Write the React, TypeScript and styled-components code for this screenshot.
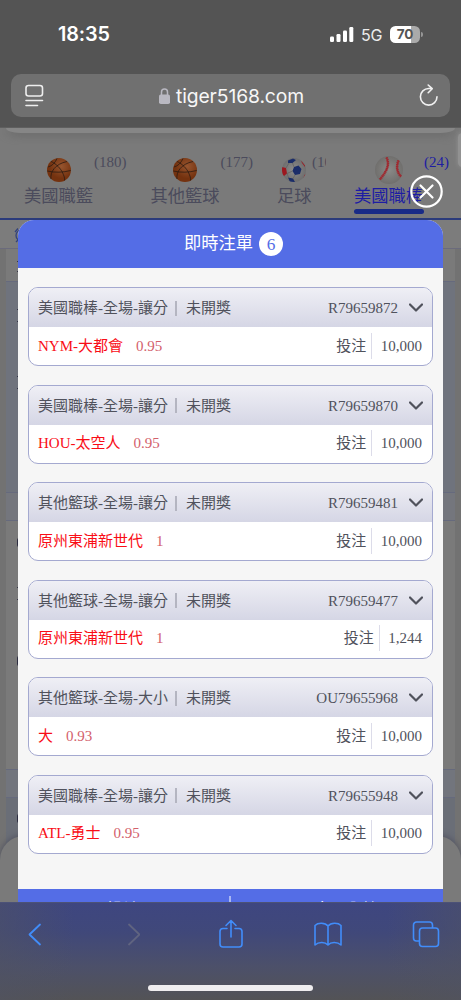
import React from 'react';
import styled, { createGlobalStyle } from 'styled-components';

const Global = createGlobalStyle`
  * { box-sizing: border-box; }
  body { margin: 0; background: #7b7b7b; font-family: "Liberation Serif", "Noto Sans CJK TC", serif; }
`;
const Screen = styled.div`
  width: 461px; height: 1000px; display: flex; flex-direction: column; overflow: hidden;
`;

const Chrome = styled.header`
  height: 128px; flex: none; background: #545454; color: #fff;
  border-bottom: 1px solid #5f5f5f; font-family: Inter, sans-serif;
`;
const StatusBar = styled.div`
  height: 74px; padding: 22px 38px 0 58px; display: flex; justify-content: space-between; align-items: flex-start;
`;
const Clock = styled.div`font-size: 19.8px; line-height: 25px; font-weight: 600; letter-spacing: -0.1px;`;
const Signals = styled.div`display: flex; align-items: center; height: 25px;`;
const Network = styled.span`font-size: 16px; margin-left: 7px; width: 23px; letter-spacing: -0.3px; color: #ededed;`;
const Battery = styled.div`
  margin-left: 6px; width: 30px; height: 17px; border-radius: 5.5px; text-align: center;
  background: linear-gradient(90deg, #fff 70%, #aaa 70%); color: #545454;
  font-weight: 700; font-size: 13.5px; line-height: 17px; letter-spacing: -0.2px;
`;
const BatteryTip = styled.i`width: 2px; height: 5px; margin-left: 1px; border-radius: 0 2px 2px 0; background: #969696;`;
const AddressBar = styled.div`
  height: 43px; margin: 0 11px; padding: 0 11px 0 14px; border-radius: 10px; background: #707070;
  display: flex; align-items: center; justify-content: space-between;
`;
const Address = styled.div`
  display: flex; align-items: center; gap: 6px; font-size: 19.3px; line-height: 24px; letter-spacing: -0.1px; color: #f7f7f7;
`;

const Viewport = styled.main`height: 774px; flex: none; position: relative; overflow: hidden; background: #7a7a7a;`;
const BannerEdge = styled.div`
  height: 5px; margin: 0 6px; background: #868686; border-radius: 0 0 14px 14px / 0 0 5px 5px; box-shadow: 0 2px 9px #656565;
`;
const SideGlow = styled.div`
  position: absolute; right: -6px; top: 5px; width: 9px; height: 34px; border-radius: 5px; background: #929292; box-shadow: 0 0 5px #929292;
`;
const Tabs = styled.nav`
  height: 87px; padding: 23px 0 0 24px; display: flex; border-bottom: 2px solid #2b3b7b;
`;
const Tab = styled.div<{ $w: number; $label: number; $active?: boolean }>`
  width: ${p => p.$w}px; flex: none; display: grid; align-content: start;
  grid-template-columns: ${p => p.$label}px 1fr; grid-template-rows: 28px 25px 5px;
  color: ${p => (p.$active ? '#1d1da3' : '#4b4b5c')};
`;
const Ball = styled.div`display: grid; place-items: center;`;
const Count = styled.span<{ $clip?: number }>`
  font-size: 15px; line-height: 17px; margin-top: -2px; padding-left: 1px; overflow: hidden; white-space: nowrap;
  width: ${p => (p.$clip ? `${p.$clip}px` : 'auto')};
`;
const TabName = styled.span`font-size: 17.3px; line-height: 26px; white-space: nowrap;`;
const Underline = styled.i`height: 5px; border-radius: 3px; background: #192b87; width: 70px;`;
const TimeRow = styled.div`height: 29px; padding: 7px 0 0 14px; background: #7c7c7c; border-bottom: 1px solid #6b6b7c;`;
const Board = styled.div`padding: 0 6px; background: #727272;`;
const Band = styled.div<{ $h: number; $fill?: string }>`
  height: ${p => p.$h}px; background: ${p => p.$fill ?? '#7a7a7a'}; border-bottom: 1px solid #666a7d;
  padding-left: 11px; display: flow-root;
`;
const Mark = styled.div<{ $top: number; $h?: number }>`
  width: 4px; height: ${p => p.$h ?? 1}px; margin-top: ${p => p.$top}px; background: #2c2c40; border-radius: 2px;
`;
const Sheet = styled.div`
  position: absolute; left: 0; right: 0; top: 708px; height: 90px; background: #7a7a7a; border-radius: 24px 24px 0 0;
  box-shadow: 0 -1px 6px #505260;
`;

const Dialog = styled.section`
  position: absolute; left: 18px; top: 92px; width: 425px; height: 700px;
  display: flex; flex-direction: column; background: #f6f6f6; border-radius: 16px 16px 0 0; overflow: hidden;
`;
const DialogHead = styled.h1`
  margin: 0; height: 48px; flex: none; padding-left: 6px; display: flex; align-items: center; justify-content: center; gap: 6px;
  background: #546de6; color: #fff; font-size: 17.3px; line-height: 24px; font-weight: 400;
`;
const Total = styled.span`
  width: 24px; height: 24px; border-radius: 50%; background: #fff; color: #546de6; text-align: center; line-height: 26px;
  margin-top: -1px;
`;
const BetList = styled.div`
  height: 621px; flex: none; padding: 19px 10px 0; display: flex; flex-direction: column; gap: 18.5px;
`;
const BetCard = styled.article`
  height: 79px; flex: none; border: 1px solid #a4a9d0; border-radius: 10px; background: #fff; overflow: hidden;
  color: #50525c; font-size: 15px; line-height: 20px;
`;
const BetHead = styled.div`
  height: 39px; padding: 1px 9px 0; display: flex; align-items: center; background: linear-gradient(#efeff5, #d5d6e5);
`;
const Divider = styled.i`width: 2px; height: 15px; background: #b4b5c1; margin: 0 9px 0 7px;`;
const BetId = styled.span`margin-left: auto; margin-right: 11px;`;
const BetBody = styled.div`height: 38px; padding: 0 10px 1px 9px; display: flex; align-items: center;`;
const Pick = styled.span`color: #f90d16;`;
const Odds = styled.span`color: #d3606b; margin-left: 13px;`;
const StakeLabel = styled.span`margin-left: auto;`;
const Stake = styled.span`
  margin-left: 5px; padding-left: 8.500px; border-left: 1px solid #dcdce9; height: 26px; line-height: 26px;
`;
const DialogFoot = styled.div`
  height: 60px; flex: none; background: #546de6; color: #fff; font-size: 17.3px; display: grid; grid-template-columns: 211px 2px 212px;
`;
const FootItem = styled.span`text-align: center; padding-top: 9px; line-height: 25px; word-spacing: 8px;`;
const FootLine = styled.i`background: #a9b7f3; margin-top: 7px; height: 20px;`;
const CloseButton = styled.button`
  position: absolute; left: 410px; top: 47px; width: 33px; height: 33px; padding: 0; border: 0; background: none; line-height: 0;
`;

const BrowserBar = styled.footer`
  height: 98px; flex: none; display: flex; flex-direction: column; align-items: center; border-top: 1px solid #4c5277;
  background: linear-gradient(90deg, #50536280, #50536200 16%, #50536200 84%, #50536280), linear-gradient(#3e4680, #40487a 30%, #4c506a 65%, #535356);
`;
const BarIcons = styled.div`
  width: 100%; height: 82px; flex: none; padding-top: 16px; display: grid; justify-content: center; justify-items: center; align-items: start;
  grid-template-columns: repeat(5, 97.8px);
`;
const HomeBar = styled.i`width: 165px; height: 6px; border-radius: 3px; background: #efedef;`;

const Basketball = () => (
  <svg width="24" height="24" viewBox="0 0 24 24" fill="none">
    <defs><radialGradient id="orange" cx=".6" cy=".35"><stop stopColor="#97552f" /><stop offset="1" stopColor="#74320f" /></radialGradient></defs>
    <circle cx="12" cy="12" r="12" fill="url(#orange)" />
    <path d="M.3 13c7 1.800 16 1.500 23.400-.5M4 3.500c3 1 8 5 11 10 2 4 3 7 2.500 9M1 9c4-1 7-4 9-8.500M4 21c-1-7 4-15 16-17.500" stroke="#2b1a12" strokeWidth=".8" />
  </svg>
);
const SoccerBall = () => (
  <svg width="24" height="24" viewBox="0 0 24 24">
    <defs>
      <radialGradient id="soccer"><stop stopColor="#8d8d8d" /><stop offset="1" stopColor="#6e6e6e" /></radialGradient>
      <clipPath id="round"><circle cx="12" cy="12" r="12" /></clipPath>
    </defs>
    <g clipPath="url(#round)">
      <path fill="url(#soccer)" d="M0 0h24v24H0z" />
      <path fill="#1b2d69" d="m12 9 4.500-1.500L19.500 11l-1.500 5-5 1-2.500-4zM6 2.500 11 .5l3 1.500-3.500 3L6 5zM6 19.500l5 1 2 3.500H8z" />
      <path fill="#9c1820" d="m0 9 4 1 1 5.500L2 18l-3-3zM19 2.500l4 5v1.500l-3-4zM22.500 17l2-2-1.500 5-2 1z" />
      <path stroke="#5a5a5a" strokeWidth=".6" fill="none" d="m4 10 3-5M5 15.500l1.500 4M10.500 5l1.500 4M5 15.500l5.500-2.500M13 17l-2 3.500" />
    </g>
  </svg>
);
const Baseball = () => (
  <svg width="28" height="28" viewBox="0 0 28 28" fill="none">
    <defs><radialGradient id="leather"><stop stopColor="#8b8a88" /><stop offset="1" stopColor="#706f6d" /></radialGradient></defs>
    <circle cx="14" cy="14" r="14" fill="url(#leather)" />
    <path d="M11.500 1.500c4 8-1 15-6.500 22M23.500 4.500c-2.500 6-1.500 12 2.500 16" stroke="#a0282f" strokeWidth="2.600" strokeDasharray="1.200 .6" />
    <path d="M11.500 1.500c4 8-1 15-6.500 22M23.500 4.500c-2.500 6-1.500 12 2.500 16" stroke="#a0282f" strokeWidth="1.100" />
  </svg>
);
const Chevron = () => (
  <svg width="14" height="10" viewBox="0 0 14 10" fill="none" stroke="#50525c" strokeWidth="2.200" strokeLinecap="round" strokeLinejoin="round"><path d="m1 1.500 6 6 6-6" /></svg>
);

const bets = [
  { game: '美國職棒-全場-讓分', id: 'R79659872', pick: 'NYM-大都會', odds: '0.95', stake: '10,000' },
  { game: '美國職棒-全場-讓分', id: 'R79659870', pick: 'HOU-太空人', odds: '0.95', stake: '10,000' },
  { game: '其他籃球-全場-讓分', id: 'R79659481', pick: '原州東浦新世代', odds: '1', stake: '10,000' },
  { game: '其他籃球-全場-讓分', id: 'R79659477', pick: '原州東浦新世代', odds: '1', stake: '1,244' },
  { game: '其他籃球-全場-大小', id: 'OU79655968', pick: '大', odds: '0.93', stake: '10,000' },
  { game: '美國職棒-全場-讓分', id: 'R79655948', pick: 'ATL-勇士', odds: '0.95', stake: '10,000' },
];

export default function App() {
  return (
    <Screen>
      <Global />
      <Chrome>
        <StatusBar>
          <Clock>18:35</Clock>
          <Signals>
            <svg width="24" height="15" viewBox="0 0 24 15" fill="#fff"><rect y="9.500" width="4" height="5.500" rx="1.200" /><rect x="6.500" y="7" width="4" height="8" rx="1.200" /><rect x="13" y="3.500" width="4" height="11.500" rx="1.200" /><rect x="19.300" width="4" height="15" rx="1.200" /></svg>
            <Network>5G</Network>
            <Battery>70</Battery>
            <BatteryTip />
          </Signals>
        </StatusBar>
        <AddressBar>
          <svg width="19" height="23" viewBox="0 0 19 23" fill="none" stroke="#eee" strokeWidth="1.600" strokeLinecap="round"><rect x="1" y="1.500" width="16.500" height="10.500" rx="2.500" /><path d="M1 16.500h16.500M1 21.500h11.500" /></svg>
          <Address>
            <svg width="11" height="16" viewBox="0 0 11 16"><path d="M2.500 8V4a3 3 0 0 1 6 0v4" fill="none" stroke="#b9b8c1" strokeWidth="1.500" /><rect y="6.500" width="11" height="9.500" rx="1.800" fill="#b9b8c1" /></svg>
            tiger5168.com
          </Address>
          <svg width="20" height="23" viewBox="0 0 20 23" fill="none" stroke="#f0f0f0" strokeWidth="1.600" strokeLinecap="round" strokeLinejoin="round"><path d="M18 12.800a8.300 8.300 0 1 1-8.300-8.300h3.500M9.200 1l4 3.700-4 4" /></svg>
        </AddressBar>
      </Chrome>
      <Viewport>
        <BannerEdge />
        <SideGlow />
        <Tabs>
          <Tab $w={126.5} $label={69}><Ball><Basketball /></Ball><Count>(180)</Count><TabName>美國職籃</TabName></Tab>
          <Tab $w={126.5} $label={69}><Ball><Basketball /></Ball><Count>(177)</Count><TabName>其他籃球</TabName></Tab>
          <Tab $w={77} $label={34}><Ball><SoccerBall /></Ball><Count $clip={15}>(101)</Count><TabName>足球</TabName></Tab>
          <Tab $w={107} $label={69} $active><Ball><Baseball /></Ball><Count>(24)</Count><TabName>美國職棒</TabName><i /><Underline /></Tab>
        </Tabs>
        <TimeRow>
          <svg width="14" height="16" viewBox="0 0 14 16" fill="none" stroke="#33427b" strokeWidth="1.300"><circle cx="7.500" cy="8.500" r="5.500" /><path d="M1 5 4 1.500M11 1.500 14 5M7 5v4l3 1M4 13l-2 2" /></svg>
        </TimeRow>
        <Board>
          <Band $h={33}><Mark $top={12} /><Mark $top={9} /></Band>
          <Band $h={211} $fill="#6f737d"><Mark $top={27} /><Mark $top={11} /><Mark $top={54} /><Mark $top={11} /></Band>
          <Band $h={28} $fill="#74767d" />
          <Band $h={249}><Mark $top={17} $h={9} /><Mark $top={40} /><Mark $top={11} /><Mark $top={56} $h={10} /></Band>
          <Band $h={28} $fill="#72757d" />
          <Band $h={130} $fill="#6a6e77"><Mark $top={16} $h={9} /></Band>
        </Board>
        <Sheet />
        <Dialog>
          <DialogHead>即時注單<Total>6</Total></DialogHead>
          <BetList>
            {bets.map(b => (
              <BetCard key={b.id}>
                <BetHead><span>{b.game}</span><Divider /><span>未開獎</span><BetId>{b.id}</BetId><Chevron /></BetHead>
                <BetBody><Pick>{b.pick}</Pick><Odds>{b.odds}</Odds><StakeLabel>投注</StakeLabel><Stake>{b.stake}</Stake></BetBody>
              </BetCard>
            ))}
          </BetList>
          <DialogFoot><FootItem>投注</FootItem><FootLine /><FootItem>下賽 分數</FootItem></DialogFoot>
        </Dialog>
        <CloseButton aria-label="close">
          <svg width="33" height="33" viewBox="0 0 33 33" fill="none" stroke="#fff" strokeWidth="2.200" strokeLinecap="round"><circle cx="16.500" cy="16.500" r="15.200" /><path d="m10.500 10.500 12 12m0-12-12 12" /></svg>
        </CloseButton>
      </Viewport>
      <BrowserBar>
        <BarIcons>
          <svg width="14" height="32" viewBox="0 0 14 32" fill="none" stroke="#418dfa" strokeWidth="1.800" strokeLinecap="round" strokeLinejoin="round"><path d="M12 5.500 1.500 15.500 12 25.500" /></svg>
          <svg width="14" height="32" viewBox="0 0 14 32" fill="none" stroke="#606480" strokeWidth="1.800" strokeLinecap="round" strokeLinejoin="round"><path d="m3 5.500 10.500 10L3 25.500" /></svg>
          <svg width="24" height="32" viewBox="0 0 24 32" fill="none" stroke="#418dfa" strokeWidth="1.600" strokeLinecap="round" strokeLinejoin="round"><path d="M8 9.500H4a3 3 0 0 0-3 3V25a3 3 0 0 0 3 3h16a3 3 0 0 0 3-3V12.500a3 3 0 0 0-3-3h-4M12 18V2M7 6.500l5-5 5 5" /></svg>
          <svg width="28" height="32" viewBox="0 0 28 32" fill="none" stroke="#418dfa" strokeWidth="1.600" strokeLinejoin="round"><path d="M14 7C11 3.500 4 3.500 1 6.500V26c4-3.500 10-3 13 0 3-3 9-3.500 13 0V6.500C24 3.500 17 3.500 14 7zv19" /></svg>
          <svg width="28" height="32" viewBox="0 0 28 32" fill="none" stroke="#418dfa" strokeWidth="1.600"><rect x="7.500" y="9" width="19" height="18.500" rx="3" /><path d="M7.500 22h-3a3 3 0 0 1-3-3V6a3 3 0 0 1 3-3h13a3 3 0 0 1 3 3v3" /></svg>
        </BarIcons>
        <HomeBar />
      </BrowserBar>
    </Screen>
  );
}
